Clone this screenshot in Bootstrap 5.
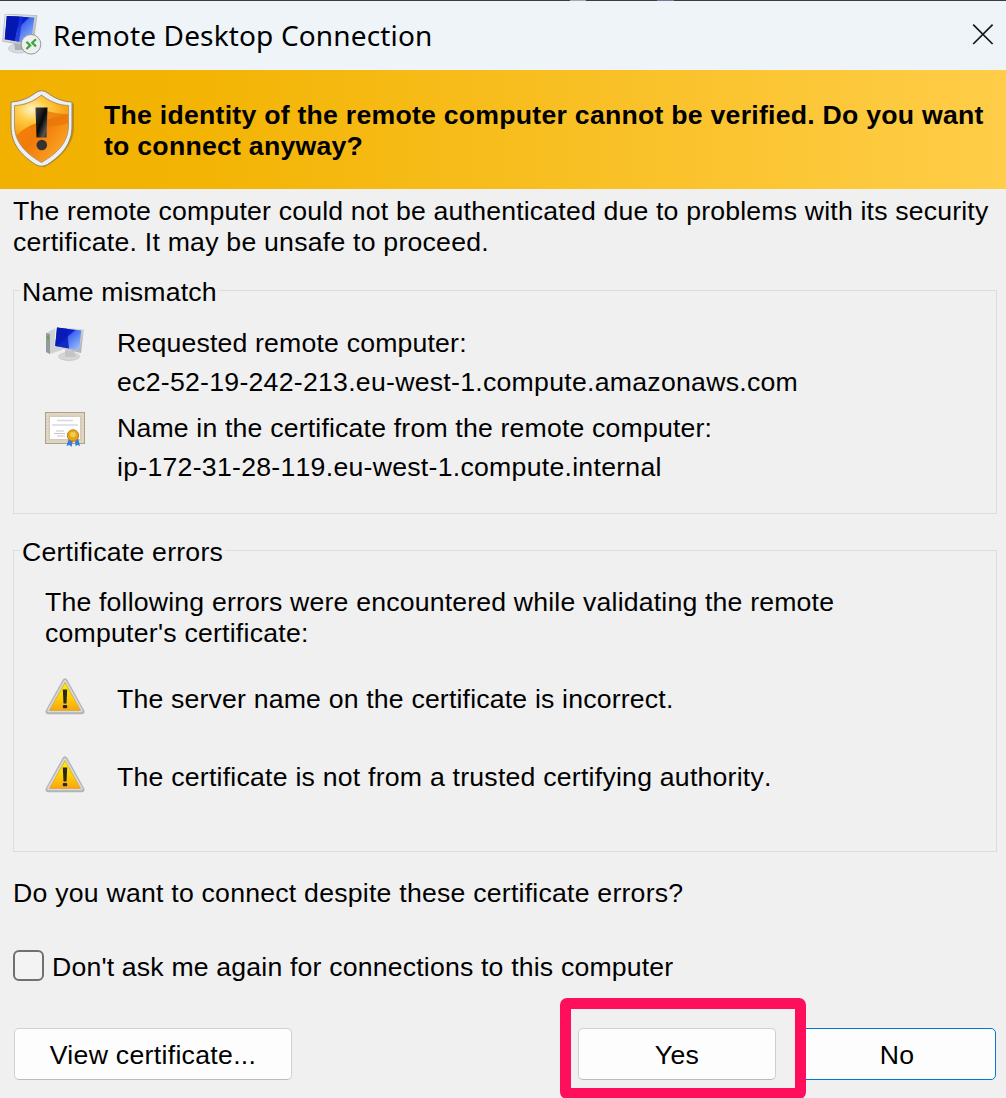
<!DOCTYPE html>
<html lang="en">
<head>
<meta charset="utf-8">
<meta name="viewport" content="width=device-width, initial-scale=1">
<title>Remote Desktop Connection</title>
<link rel="stylesheet" href="https://cdn.jsdelivr.net/npm/bootstrap@5.3.0/dist/css/bootstrap.min.css">
<style>
body{background:#f0f0f0;color:#000;font:26.65px/31px "Liberation Sans",Arial,sans-serif;letter-spacing:.18px;font-kerning:none;overflow:hidden}
.dialog{width:1006px;height:1098px;overflow:hidden;white-space:nowrap}
.backdrop-edge{height:1px;background:linear-gradient(90deg,#3d3b42 0 570px,#aaa5a8 570px 586px,#3d3b42 586px 657px,#6d7e92 657px 674px,#3d3b42 674px)}
.titlebar{height:69px;background:#eff4f9;padding:0 11px 0 2px}
.titlebar h1{font:28px/36px "Noto Sans",sans-serif;letter-spacing:.15px;margin:0 0 2px 11px;color:#000}
.x-btn{width:24px;height:24px;padding:0;border:0;background:none;display:flex;margin-bottom:2px}
.app-icon{margin-bottom:2px}
.banner{height:119px;background:linear-gradient(90deg,#f2b100,#f3b404 20%,#ffcd48);padding:20px 0 0 9px}
.banner h2{font:bold 26.65px/31px "Liberation Sans",Arial,sans-serif;letter-spacing:.25px;margin:10px 0 0 27px}
.content{padding:7px 9px 0 13px}
.group{border:1px solid #dcdcdc;position:relative}
.group-name{position:absolute;top:-14px;left:6px;background:#f0f0f0;padding:0 2px}
.g1{height:224px;margin-top:32px;padding:37px 0 0 31px}
.g2{height:302px;margin-top:36px;padding:36px 0 0 31px}
.g1 svg,.g2 svg{flex:none;margin-right:32px}
.g1 .pc-icon{margin-top:-2px}
.g1 .cert-icon{margin-top:-1px}
.certificate-row{margin-top:15px}
.server-row{margin-top:29px}
.trust-row{margin-top:40px}
.error-text{padding-top:6px}
.question{margin-top:26px}
.loose{letter-spacing:.23px}
.ask-row{margin-top:41px}
.ask-row span{padding-top:2px}
.actions{margin:45px 0 0 1px}
.line{display:block}
.host{letter-spacing:.27px}
.check-box.form-check-input{width:31px;height:31px;margin:0 8px 0 0;border:2px solid #707070;border-radius:6px;background:#f3f3f3}
.dlg-btn{height:52px;padding:2px 0 0;border:1px solid #d0d0d0;border-bottom-color:#bababa;border-radius:5px;background:#fdfdfd;color:#000;font-size:26.65px;line-height:31px;letter-spacing:.3px;width:198px}
.dlg-btn.wide{width:278px}
.dlg-btn.default{border-color:#0078d4}
.highlight{position:absolute;left:560px;top:998px;width:246px;height:101px;border:11px solid #ff0f5b;border-radius:7px;pointer-events:none}
</style>
<script src="https://cdn.jsdelivr.net/npm/bootstrap@5.3.0/dist/js/bootstrap.bundle.min.js"></script>
</head>
<body>
<svg width="0" height="0" class="position-absolute" aria-hidden="true">
<defs>
<linearGradient id="screen" x1="0" y1="0" x2="1" y2="1"><stop offset="0" stop-color="#0818a0"/><stop offset=".42" stop-color="#0a20d0"/><stop offset=".46" stop-color="#3f68ee"/><stop offset="1" stop-color="#a9cdff"/></linearGradient>
<linearGradient id="metal" x1="0" y1="0" x2="1" y2="1"><stop offset="0" stop-color="#fafafa"/><stop offset="1" stop-color="#a9abae"/></linearGradient>
<linearGradient id="yellow" x1="0" y1="0" x2="0" y2="1"><stop offset="0" stop-color="#fff000"/><stop offset=".55" stop-color="#ffd008"/><stop offset="1" stop-color="#f9a512"/></linearGradient>
<linearGradient id="orange" x1="0" y1="0" x2="1" y2="1"><stop offset="0" stop-color="#f58a12"/><stop offset=".5" stop-color="#f17a08"/><stop offset="1" stop-color="#ffb530"/></linearGradient>
<radialGradient id="gloss" cx=".32" cy=".35" r=".65"><stop offset="0" stop-color="#fff3c4"/><stop offset=".45" stop-color="#ffcb45"/><stop offset="1" stop-color="#f9a316"/></radialGradient>
<linearGradient id="ink" x1="0" y1="0" x2="1" y2="1"><stop offset="0" stop-color="#444"/><stop offset=".5" stop-color="#080808"/><stop offset=".8" stop-color="#555"/><stop offset="1" stop-color="#222"/></linearGradient>
<symbol id="warn" viewBox="0 0 40 38">
<path d="M20 3.200L36.800 33.600H3.200Z" fill="#b1b3b6" stroke="#b1b3b6" stroke-width="5.400" stroke-linejoin="round"/>
<path d="M20 3.400L36.400 32.800H3.600Z" fill="#d8dadc" stroke="#d8dadc" stroke-width="2.800" stroke-linejoin="round"/>
<path d="M20 4.600L35.600 32.400H4.400Z" fill="url(#yellow)" stroke="#d9a431" stroke-width=".8"/>
<path d="M17.800 11.500h4.400l-.7 14h-3z" fill="#282820"/><rect x="17.800" y="27" width="4.400" height="3.200" rx="1" fill="#282820"/>
</symbol>
</defs>
</svg>
<main class="dialog position-relative">
<div class="backdrop-edge"></div>
<header class="titlebar d-flex align-items-center">
<svg class="app-icon" width="40" height="42" viewBox="0 0 40 42">
<ellipse cx="17" cy="34.500" rx="10.500" ry="4.500" fill="#d9dbdd" stroke="#b7b9bb" stroke-width=".6"/>
<path d="M12 27l11 2v7H13z" fill="#aeb0b3"/>
<path d="M3.200 .2L35 1.600 30.600 33 .6 27.200Z" fill="url(#metal)" stroke="#b3b6ba" stroke-width=".8"/>
<path d="M4.800 2L32.400 3.400 28.700 30 2.800 25.200Z" fill="url(#screen)"/>
<path d="M4.800 2l12.800.6L13 27l-10.200-1.800z" fill="#0417b0"/><path d="M17.600 2.600h3.200L17 27.700 13 27z" fill="#1731d6" opacity=".8"/>
<circle cx="29" cy="30.300" r="9.800" fill="#eef0f0" stroke="#96989a" stroke-width="1"/>
<path d="M24.400 27.800l3.800 3.600-3.800 3.600M34 25.200l-3.800 3.600 3.800 3.600" fill="none" stroke="#3ba43b" stroke-width="2.200"/>
</svg>
<h1>Remote Desktop Connection</h1>
<button class="x-btn ms-auto" aria-label="Close"><svg width="24" height="24" viewBox="0 0 24 24"><path d="M2.200 1.600l19.400 19.400M21.600 1.600L2.200 21" stroke="#15171a" stroke-width="1.700"/></svg></button>
</header>
<section class="banner d-flex align-items-start">
<svg width="68" height="78" viewBox="0 0 68 78">
<path d="M34 2C25 9 14 12 4 12v24c0 17 13 31 30 40 17-9 30-23 30-40V12C53 12 43 9 34 2z" transform="translate(1 1.500)" fill="#9b7115" opacity=".55"/>
<path d="M27 2.500Q32.500-1 38 2.500C45 8 53 11.500 63 12V36c0 18-10 29-24.500 38.500q-6 3.500-12 0C12 65 2 54 2 36V12C12 11.500 20 8 27 2.500z" fill="#edf0f2" stroke="#94845f" stroke-width="1"/>
<path d="M32.500 5C24.500 11.500 15 15.300 5.500 15.500V35c0 17 10.500 28 27 37.500C49 63 59.500 52 59.500 35V15.500C50 15.300 40.500 11.500 32.500 5z" fill="url(#orange)" stroke="#a99368" stroke-width=".9"/>
<path d="M32.500 5.700C24.500 12 15 16 6 16V35c0 4 .8 7 2 10C18 34 36 30 59 24V16C50 16 40.500 12 32.500 5.700z" fill="url(#gloss)"/>
<path d="M38 21C45 23 51 24 59 24v9C50 37 34 36 20 38 27 33 35 30 38 21z" fill="#e87509" opacity=".75"/>
<path d="M26.500 17.500h12L37.500 47.500h-10z" fill="url(#ink)"/><circle cx="32.800" cy="55" r="5.300" fill="#333"/>
</svg>
<h2><span class="line">The identity of the remote computer cannot be verified. Do you want</span><span class="line">to connect anyway?</span></h2>
</section>
<div class="content">
<div><span class="line">The remote computer could not be authenticated due to problems with its security</span><span class="line loose">certificate. It may be unsafe to proceed.</span></div>
<section class="group g1">
<div class="group-name">Name mismatch</div>
<div class="d-flex align-items-start">
<svg class="pc-icon" width="40" height="36" viewBox="0 0 40 36">
<path d="M1 7l10-5 6 3v19L5 28l-4-2z" fill="#cfd2d4"/><path d="M1 7l4 1v20l-4-2z" fill="#96999c"/><path d="M2 10l2 .4v3L2 13z" fill="#58ad3c"/>
<ellipse cx="24" cy="30.500" rx="10.500" ry="4" fill="#d4d6d8" stroke="#b4b6b8" stroke-width=".5"/><path d="M20 24l9 1 2 6H20z" fill="#c3c5c7"/>
<path d="M10.500.5L39 3.500 36 27 9 21z" fill="url(#metal)"/><path d="M12 1.500L36.200 4.500 34 24.300 10.200 20z" fill="url(#screen)"/><path d="M12 1.500l10 1.200 2 19.800L10.200 20z" fill="#071bb9" opacity=".85"/>
</svg>
<div><span class="line">Requested remote computer:</span><span class="line mt-2 host">ec2-52-19-242-213.eu-west-1.compute.amazonaws.com</span></div>
</div>
<div class="d-flex align-items-start certificate-row">
<svg class="cert-icon" width="40" height="36" viewBox="0 0 40 36">
<rect x=".5" y=".5" width="39" height="31" fill="#dbd0bd" stroke="#aaa28f"/><rect x="2" y="2" width="36" height="28" fill="none" stroke="#e9e0cf" stroke-dasharray="2 1"/><rect x="4.500" y="4.500" width="31" height="23" fill="#fff" stroke="#d3cab9"/>
<path d="M12 8.500h16M7 13h26" stroke="#d5d7e6" stroke-width="1.500"/><path d="M11 19h8M9 21.500h11M12 24h8" stroke="#c3c5d2" stroke-width="1"/>
<path d="M24 26l-2.500 8 3-1 2 2 1.500-7zM30 27l.5 7 2-1 2.500 1-2-8z" fill="#2f7fe0"/><circle cx="28" cy="23.500" r="5.700" fill="#e6a51b" stroke="#c57d11"/><circle cx="28" cy="22.500" r="2.800" fill="#f6cc4c"/>
</svg>
<div><span class="line">Name in the certificate from the remote computer:</span><span class="line mt-2 host">ip-172-31-28-119.eu-west-1.compute.internal</span></div>
</div>
</section>
<section class="group g2">
<div class="group-name loose">Certificate errors</div>
<div><span class="line">The following errors were encountered while validating the remote</span><span class="line loose">computer's certificate:</span></div>
<div class="d-flex align-items-start server-row"><svg width="40" height="38"><use href="#warn"/></svg><span class="error-text">The server name on the certificate is incorrect.</span></div>
<div class="d-flex align-items-start trust-row"><svg width="40" height="38"><use href="#warn"/></svg><span class="error-text loose">The certificate is not from a trusted certifying authority.</span></div>
</section>
<div class="question loose">Do you want to connect despite these certificate errors?</div>
<label class="d-flex align-items-start ask-row"><input type="checkbox" class="form-check-input check-box"><span>Don't ask me again for connections to this computer</span></label>
<div class="d-flex actions"><button class="btn dlg-btn wide">View certificate...</button><button class="btn dlg-btn" style="margin-left:286px">Yes</button><button class="btn dlg-btn default" style="margin-left:22px">No</button></div>
</div>
<div class="highlight"></div>
</main>
</body>
</html>
